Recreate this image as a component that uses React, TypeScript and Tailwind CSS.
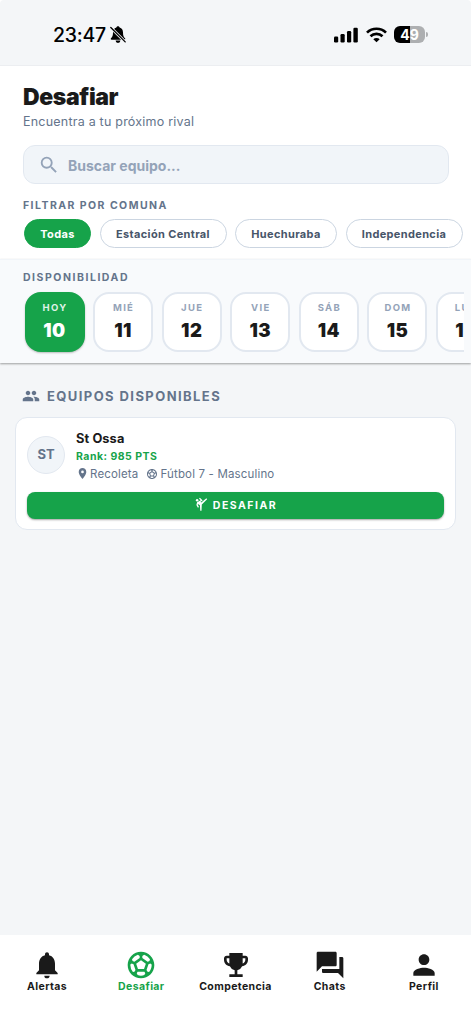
import type { IconType } from "react-icons";
import {
  MdEmojiEvents,
  MdForum,
  MdGroup,
  MdNotifications,
  MdPerson,
  MdPlace,
  MdSearch,
  MdSportsMartialArts,
  MdSportsSoccer,
} from "react-icons/md";

const comunas = [
  { name: "Todas", width: "w-[67px]", active: true },
  { name: "Estación Central", width: "w-[127px]", active: false },
  { name: "Huechuraba", width: "w-[102px]", active: false },
  { name: "Independencia", width: "w-[117px]", active: false },
];

const days = [
  { label: "HOY", date: 10 },
  { label: "MIÉ", date: 11 },
  { label: "JUE", date: 12 },
  { label: "VIE", date: 13 },
  { label: "SÁB", date: 14 },
  { label: "DOM", date: 15 },
  { label: "LUN", date: 16 },
];

const tabs: { label: string; icon: IconType; active?: boolean }[] = [
  { label: "Alertas", icon: MdNotifications },
  { label: "Desafiar", icon: MdSportsSoccer, active: true },
  { label: "Competencia", icon: MdEmojiEvents },
  { label: "Chats", icon: MdForum },
  { label: "Perfil", icon: MdPerson },
];

function StatusBar() {
  return (
    <div className="flex h-[66px] shrink-0 items-center justify-between border-b border-[#eceef1] pt-[4px] pr-[43px] pl-[53px] text-black">
      <div className="flex items-center">
        <span className="pt-px text-[19.5px] leading-6 font-medium tracking-[-0.25px]">23:47</span>
        <svg width="16" height="17" viewBox="0 0 16 17" className="ml-[4px]" fill="currentColor">
          <path d="M8 .3c.9 0 1.5.6 1.6 1.3 2.3.7 3.4 2.5 3.4 4.9 0 3.3.6 4.3 2 5.7.6.7.2 1.5-.6 1.5H1.6c-.8 0-1.2-.8-.6-1.5 1.4-1.4 2-2.4 2-5.7 0-2.4 1.1-4.2 3.4-4.9C6.5.9 7.1.3 8 .3ZM5.600 14.500h4.800a2.400 2.400 0 0 1-4.800 0Z" />
          <path d="M.5 1.2 15.5 16.2" stroke="#f4f6f8" strokeWidth="2.9" />
          <path d="M.8 1.5 15.2 15.9" stroke="currentColor" strokeWidth="1.3" strokeLinecap="round" />
        </svg>
      </div>
      <div className="flex items-center">
        <svg width="24" height="16" viewBox="0 0 24 16" fill="currentColor">
          <rect x="0" y="9.5" width="4.2" height="6" rx="1.2" />
          <rect x="6.5" y="7" width="4.2" height="8.5" rx="1.2" />
          <rect x="13" y="4" width="4.2" height="11.5" rx="1.2" />
          <rect x="19.4" y="0.8" width="4.4" height="14.7" rx="1.2" />
        </svg>
        <svg width="21" height="16" viewBox="0 0 21 16" className="ml-2" fill="none" stroke="currentColor" strokeWidth="2.7">
          <path d="M1 5.6a13.7 13.7 0 0 1 19 0" />
          <path d="M4.5 9.3a8.7 8.7 0 0 1 12 0" />
          <path d="M10.5 15.3 7.3 12.2a4.6 4.6 0 0 1 6.4 0Z" fill="currentColor" stroke="none" />
        </svg>
        <div className="ml-[7.5px] flex h-[17px] w-[31px] items-center justify-center overflow-hidden rounded-[6px] bg-linear-to-r from-black from-50% to-[#adafb1] to-50% text-[14px] leading-[17px] font-bold text-white">
          49
        </div>
        <div className="ml-px h-[5px] w-[2px] rounded-r-full bg-[#adafb1]" />
      </div>
    </div>
  );
}

function Header() {
  return (
    <header className="h-[193px] shrink-0 bg-white">
      <div className="px-[23px] pt-[15px]">
        <h1 className="text-[23px] leading-[32px] font-black tracking-[-0.4px] text-[#1a1a1a]">Desafiar</h1>
        <p className="pt-px text-[12.5px] leading-4 tracking-[0.22px] text-[#64748b]">Encuentra a tu próximo rival</p>
        <div className="mt-[15px] flex h-[39px] w-[426px] items-center rounded-xl border border-[#e2e8f0] bg-[#f1f5f9] pl-[14px] text-[#94a3b8]">
          <MdSearch size={22} />
          <span className="ml-2 pt-[2px] text-[14px] leading-5 font-bold">Buscar equipo...</span>
        </div>
        <h2 className="mt-[14px] text-[10.5px] leading-4 font-bold tracking-[1.45px] text-[#64748b]">FILTRAR POR COMUNA</h2>
      </div>
      <div className="mt-[5px] flex gap-[8.5px] overflow-hidden pl-[24px]">
        {comunas.map((c) => (
          <button
            key={c.name}
            className={`h-[29px] shrink-0 rounded-full border text-[11px] leading-4 font-bold tracking-[0.35px] whitespace-nowrap ${c.width} ${
              c.active ? "border-[#16a34a] bg-[#16a34a] text-white" : "border-[#cbd5e1] bg-white text-[#475569]"
            }`}
          >
            {c.name}
          </button>
        ))}
      </div>
    </header>
  );
}

function Availability() {
  return (
    <section className="relative h-[104px] shrink-0 border-t border-[#f1f5f9] bg-[#f8fafc] pt-[10px] shadow-[0_1px_2px_rgba(0,0,0,0.36)]">
      <h2 className="pl-[23px] text-[10.5px] leading-4 font-bold tracking-[1.53px] text-[#64748b]">DISPONIBILIDAD</h2>
      <div className="mr-[7px] flex gap-[8.6px] overflow-hidden pt-[5.6px] pb-1 pl-[24.5px]">
        {days.map((d, i) => (
          <button
            key={d.date}
            className={`flex h-[60px] w-[60px] shrink-0 flex-col items-center rounded-[16px] border-2 pt-[8px] ${
              i === 0
                ? "border-[#16a34a] bg-[#16a34a] text-white shadow-[0_1px_2px_rgba(0,0,0,0.25)]"
                : "border-[#e2e8f0] bg-white text-[#1a1a1a]"
            }`}
          >
            <span
              className={`pl-px text-[9.5px] leading-3 font-bold tracking-[1.3px] ${i === 0 ? "text-[#dff2e6]" : "text-[#94a3b8]"}`}
            >
              {d.label}
            </span>
            <span className="mt-[4px] text-[18.5px] leading-6 font-black tracking-[0.5px]">{d.date}</span>
          </button>
        ))}
      </div>
    </section>
  );
}

function TeamCard() {
  return (
    <article className="mx-[15px] mt-[11px] h-[113px] rounded-[12px] border border-[#e2e8f0] bg-white px-[11px]">
      <div className="flex h-[74px] items-center">
        <div className="flex size-[38px] items-center justify-center rounded-full border border-[#e2e8f0] bg-[#f1f5f9] text-[13px] font-bold text-[#64748b]">
          ST
        </div>
        <div className="ml-[11px] pt-[3px]">
          <h3 className="text-[12.8px] leading-[18px] font-bold tracking-[0.1px] text-[#1a1a1a]">St Ossa</h3>
          <p className="text-[10.5px] leading-[17px] font-bold tracking-[0.48px] text-[#16a34a]">Rank: 985 PTS</p>
          <div className="flex items-center text-[11.5px] leading-[18px] tracking-[0.16px] text-[#64748b]">
            <MdPlace size={13} className="-mt-px" />
            <span className="ml-px">Recoleta</span>
            <MdSportsSoccer size={12} className="ml-[8px] -mt-px" />
            <span className="ml-[2px]">Fútbol 7 - Masculino</span>
          </div>
        </div>
      </div>
      <button className="flex h-[26.5px] w-full items-center justify-center rounded-[8px] bg-[#16a34a] text-white shadow-[0_1px_2px_rgba(0,0,0,0.36)]">
        <MdSportsMartialArts size={15} className="-mt-px" />
        <span className="ml-[4px] pt-[2px] text-[10.5px] leading-4 font-bold tracking-[1.5px]">DESAFIAR</span>
      </button>
    </article>
  );
}

export default function App() {
  return (
    <div className="flex h-[1024px] w-[471px] flex-col overflow-hidden rounded-t-[4px] bg-[#f4f6f8] font-['Inter',sans-serif]">
      <StatusBar />
      <Header />
      <Availability />
      <main className="flex-1">
        <div className="mt-[23px] flex h-5 items-center pl-[22px] text-[#64748b]">
          <MdGroup size={18} />
          <h2 className="ml-[7px] text-[13px] leading-5 font-bold tracking-[1.42px]">EQUIPOS DISPONIBLES</h2>
        </div>
        <TeamCard />
      </main>
      <nav className="flex h-[89px] shrink-0 bg-white pt-[14px]">
        {tabs.map(({ label, icon: Icon, active }) => (
          <button key={label} className={`flex flex-1 flex-col items-center ${active ? "text-[#16a34a]" : "text-[#1a1a1a]"}`}>
            <Icon size={32} />
            <span className="-mt-[2.5px] text-[10.5px] leading-4 font-bold tracking-[0.4px]">{label}</span>
          </button>
        ))}
      </nav>
    </div>
  );
}
